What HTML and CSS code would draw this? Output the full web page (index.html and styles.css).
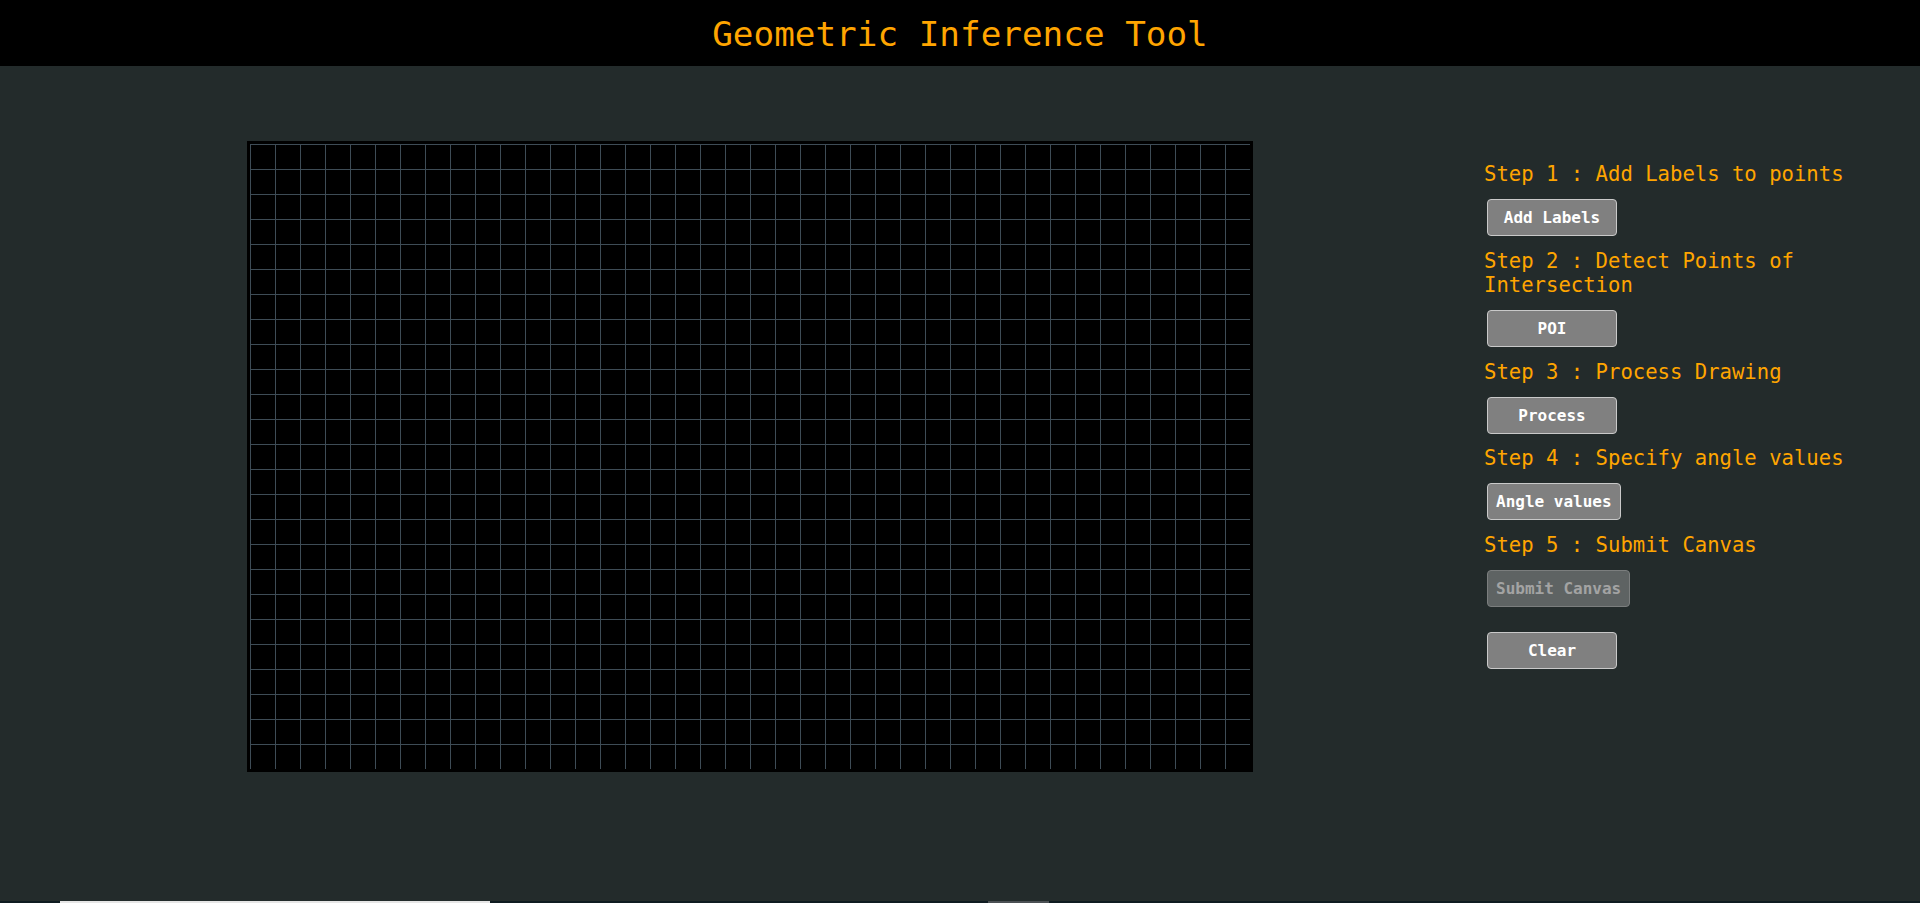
FILE: index.html
```html
<!DOCTYPE html>
<html lang="en">
<head>
<meta charset="utf-8">
<title>Geometric Inference Tool</title>
<link rel="stylesheet" href="styles.css">
</head>
<body>
<header class="topbar">
  <h1 class="title">Geometric Inference Tool</h1>
</header>
<main class="workspace">
  <div class="board">
    <div class="grid"></div>
  </div>
  <aside class="steps">
    <p class="step">Step 1 : Add Labels to points</p>
    <button class="btn">Add Labels</button>
    <p class="step">Step 2 : Detect Points of Intersection</p>
    <button class="btn">POI</button>
    <p class="step">Step 3 : Process Drawing</p>
    <button class="btn">Process</button>
    <p class="step">Step 4 : Specify angle values</p>
    <button class="btn">Angle values</button>
    <p class="step">Step 5 : Submit Canvas</p>
    <button class="btn" disabled>Submit Canvas</button>
    <button class="btn btn-clear">Clear</button>
  </aside>
</main>
<section class="below">
  <div class="below-bar"></div>
  <div class="below-chip"></div>
</section>
</body>
</html>
```
FILE: styles.css
```css
html, body {
  margin: 0;
  padding: 0;
}
body {
  background: #232b2b;
  font-family: "DejaVu Sans Mono", "Liberation Mono", monospace;
  overflow: hidden;
}
.topbar {
  background: #000;
  height: 66px;
  box-sizing: border-box;
  padding-top: 14px;
}
.title {
  margin: 0;
  font-size: 34.3px;
  font-weight: normal;
  color: #ffa500;
  text-align: center;
  line-height: 40px;
}
.workspace {
  display: flex;
  align-items: flex-start;
  height: 835px;
  box-sizing: border-box;
  padding-top: 75px;
  padding-left: 247px;
}
.board {
  border: 3px solid #000;
  background: #000;
  width: 1000px;
  height: 625px;
  flex: none;
}
.grid {
  width: 1000px;
  height: 625px;
  background-image:
    linear-gradient(to right, #3e4c56 1px, transparent 1px),
    linear-gradient(to bottom, #3e4c56 1px, transparent 1px);
  background-size: 25px 25px;
}
.steps {
  margin-left: 231px;
  margin-top: 21px;
  width: 400px;
  display: flex;
  flex-direction: column;
  align-items: flex-start;
  gap: 12.6px;
}
.step {
  margin: 0;
  font-size: 20.6px;
  line-height: 24.4px;
  color: #ffa500;
}
.btn {
  margin-left: 3px;
  min-width: 130px;
  height: 37px;
  padding: 0 8px;
  box-sizing: border-box;
  background: #808080;
  color: #fff;
  border: 1px solid #c9c9c9;
  border-radius: 4px;
  font-family: "DejaVu Sans Mono", "Liberation Mono", monospace;
  font-weight: bold;
  font-size: 16px;
}
.btn:disabled {
  background: #5e6363;
  color: #a3a3a3;
  border-color: #7b7e7e;
}
.btn-clear {
  margin-top: 13px;
}
.below {
  display: flex;
  align-items: flex-start;
  height: 40px;
  background: #0f1b21;
  padding-left: 60px;
}
.below-bar {
  width: 430px;
  height: 2px;
  background: #e6e6e6;
}
.below-chip {
  margin-left: 498px;
  width: 61px;
  height: 2px;
  background: #4b5054;
}
```
